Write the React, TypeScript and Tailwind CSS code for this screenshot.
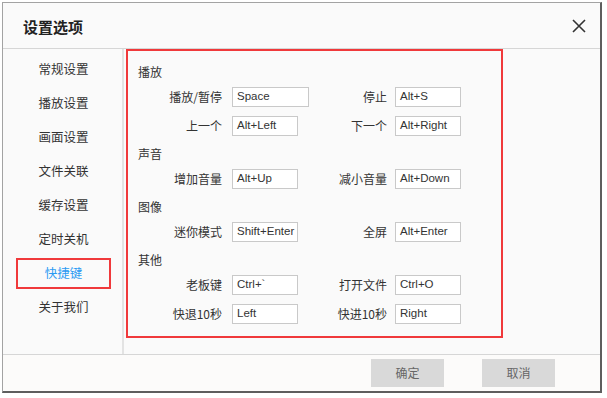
import React from "react";

type Shortcut = { label: string; value: string; wide?: boolean };

const sections: { title: string; rows: [Shortcut, Shortcut][] }[] = [
  {
    title: "播放",
    rows: [
      [
        { label: "播放/暂停", value: "Space", wide: true },
        { label: "停止", value: "Alt+S" },
      ],
      [
        { label: "上一个", value: "Alt+Left" },
        { label: "下一个", value: "Alt+Right" },
      ],
    ],
  },
  {
    title: "声音",
    rows: [
      [
        { label: "增加音量", value: "Alt+Up" },
        { label: "减小音量", value: "Alt+Down" },
      ],
    ],
  },
  {
    title: "图像",
    rows: [
      [
        { label: "迷你模式", value: "Shift+Enter" },
        { label: "全屏", value: "Alt+Enter" },
      ],
    ],
  },
  {
    title: "其他",
    rows: [
      [
        { label: "老板键", value: "Ctrl+`" },
        { label: "打开文件", value: "Ctrl+O" },
      ],
      [
        { label: "快退10秒", value: "Left" },
        { label: "快进10秒", value: "Right" },
      ],
    ],
  },
];

const menu = ["常规设置", "播放设置", "画面设置", "文件关联", "缓存设置", "定时关机", "快捷键", "关于我们"];

function KeyBox({ value, wide }: { value: string; wide?: boolean }) {
  return (
    <div
      className={`${wide ? "w-[77px]" : "w-[66px]"} h-[20px] flex items-center pl-[4px] bg-white border border-[#c9c9c9] text-[11.5px] text-[#333] leading-none font-['Liberation_Sans',sans-serif]`}
    >
      {value}
    </div>
  );
}

export default function App() {
  return (
    <div className="w-[607px] h-[398px] bg-white pt-[2px] pl-[2px] font-['Noto_Sans_CJK_SC','Noto_Sans',sans-serif]">
      <div className="w-[600px] h-[391px] flex flex-col bg-[#fafafa] border-l border-t border-[#a3a3a3] border-r-2 border-b-2 border-r-[#5e5e5e] border-b-[#5e5e5e]">
        {/* Header */}
        <div className="h-[46px] shrink-0 flex items-center justify-between pl-[20px] pr-[14px] pt-[3px] border-b border-[#d6d6d6]">
          <span className="text-[15px] font-bold text-[#222]">设置选项</span>
          <svg width="14" height="14" viewBox="0 0 14 14" className="mt-[-2px]">
            <path d="M1 1 L13 13 M13 1 L1 13" stroke="#333" strokeWidth="1.6" fill="none" />
          </svg>
        </div>

        {/* Body */}
        <div className="h-[305px] shrink-0 flex">
          <div className="w-[121px] shrink-0 border-r-2 border-[#e3e3e3] pt-[5px] flex flex-col gap-[3px]">
            {menu.map((item) => (
              <div
                key={item}
                className={`ml-[13px] w-[95px] h-[31px] flex items-center justify-center text-[12.5px] ${
                  item === "快捷键" ? "border-2 border-[#f0393b] text-[#2b9af3]" : "text-[#333]"
                }`}
              >
                {item}
              </div>
            ))}
          </div>

          <div className="flex-1">
            <div className="ml-[2px] w-[377px] h-[289px] border-2 border-[#f0393b] pt-[11px] pl-[10px] flex flex-col gap-[8px]">
              {sections.map((sec) => (
                <div key={sec.title}>
                  <div className="h-[20px] flex items-center text-[12px] text-[#333]">{sec.title}</div>
                  <div className="mt-[5px] flex flex-col gap-[9px]">
                    {sec.rows.map(([a, b]) => (
                      <div key={a.label} className="flex items-center h-[20px] text-[12px] text-[#333]">
                        <span className="w-[84px] text-right">{a.label}</span>
                        <div className="w-[80px] ml-[10px]">
                          <KeyBox value={a.value} wide={a.wide} />
                        </div>
                        <span className="w-[75px] text-right">{b.label}</span>
                        <div className="ml-[8px]">
                          <KeyBox value={b.value} />
                        </div>
                      </div>
                    ))}
                  </div>
                </div>
              ))}
            </div>
          </div>
        </div>

        {/* Footer */}
        <div className="flex-1 border-t border-[#d6d6d6] bg-[#fcfbfa] flex items-center justify-end gap-[38px] pr-[45px]">
          <button className="w-[73px] h-[28px] bg-[#d9d9d9] text-[12px] text-[#666]">确定</button>
          <button className="w-[73px] h-[28px] bg-[#d9d9d9] text-[12px] text-[#666]">取消</button>
        </div>
      </div>
    </div>
  );
}
